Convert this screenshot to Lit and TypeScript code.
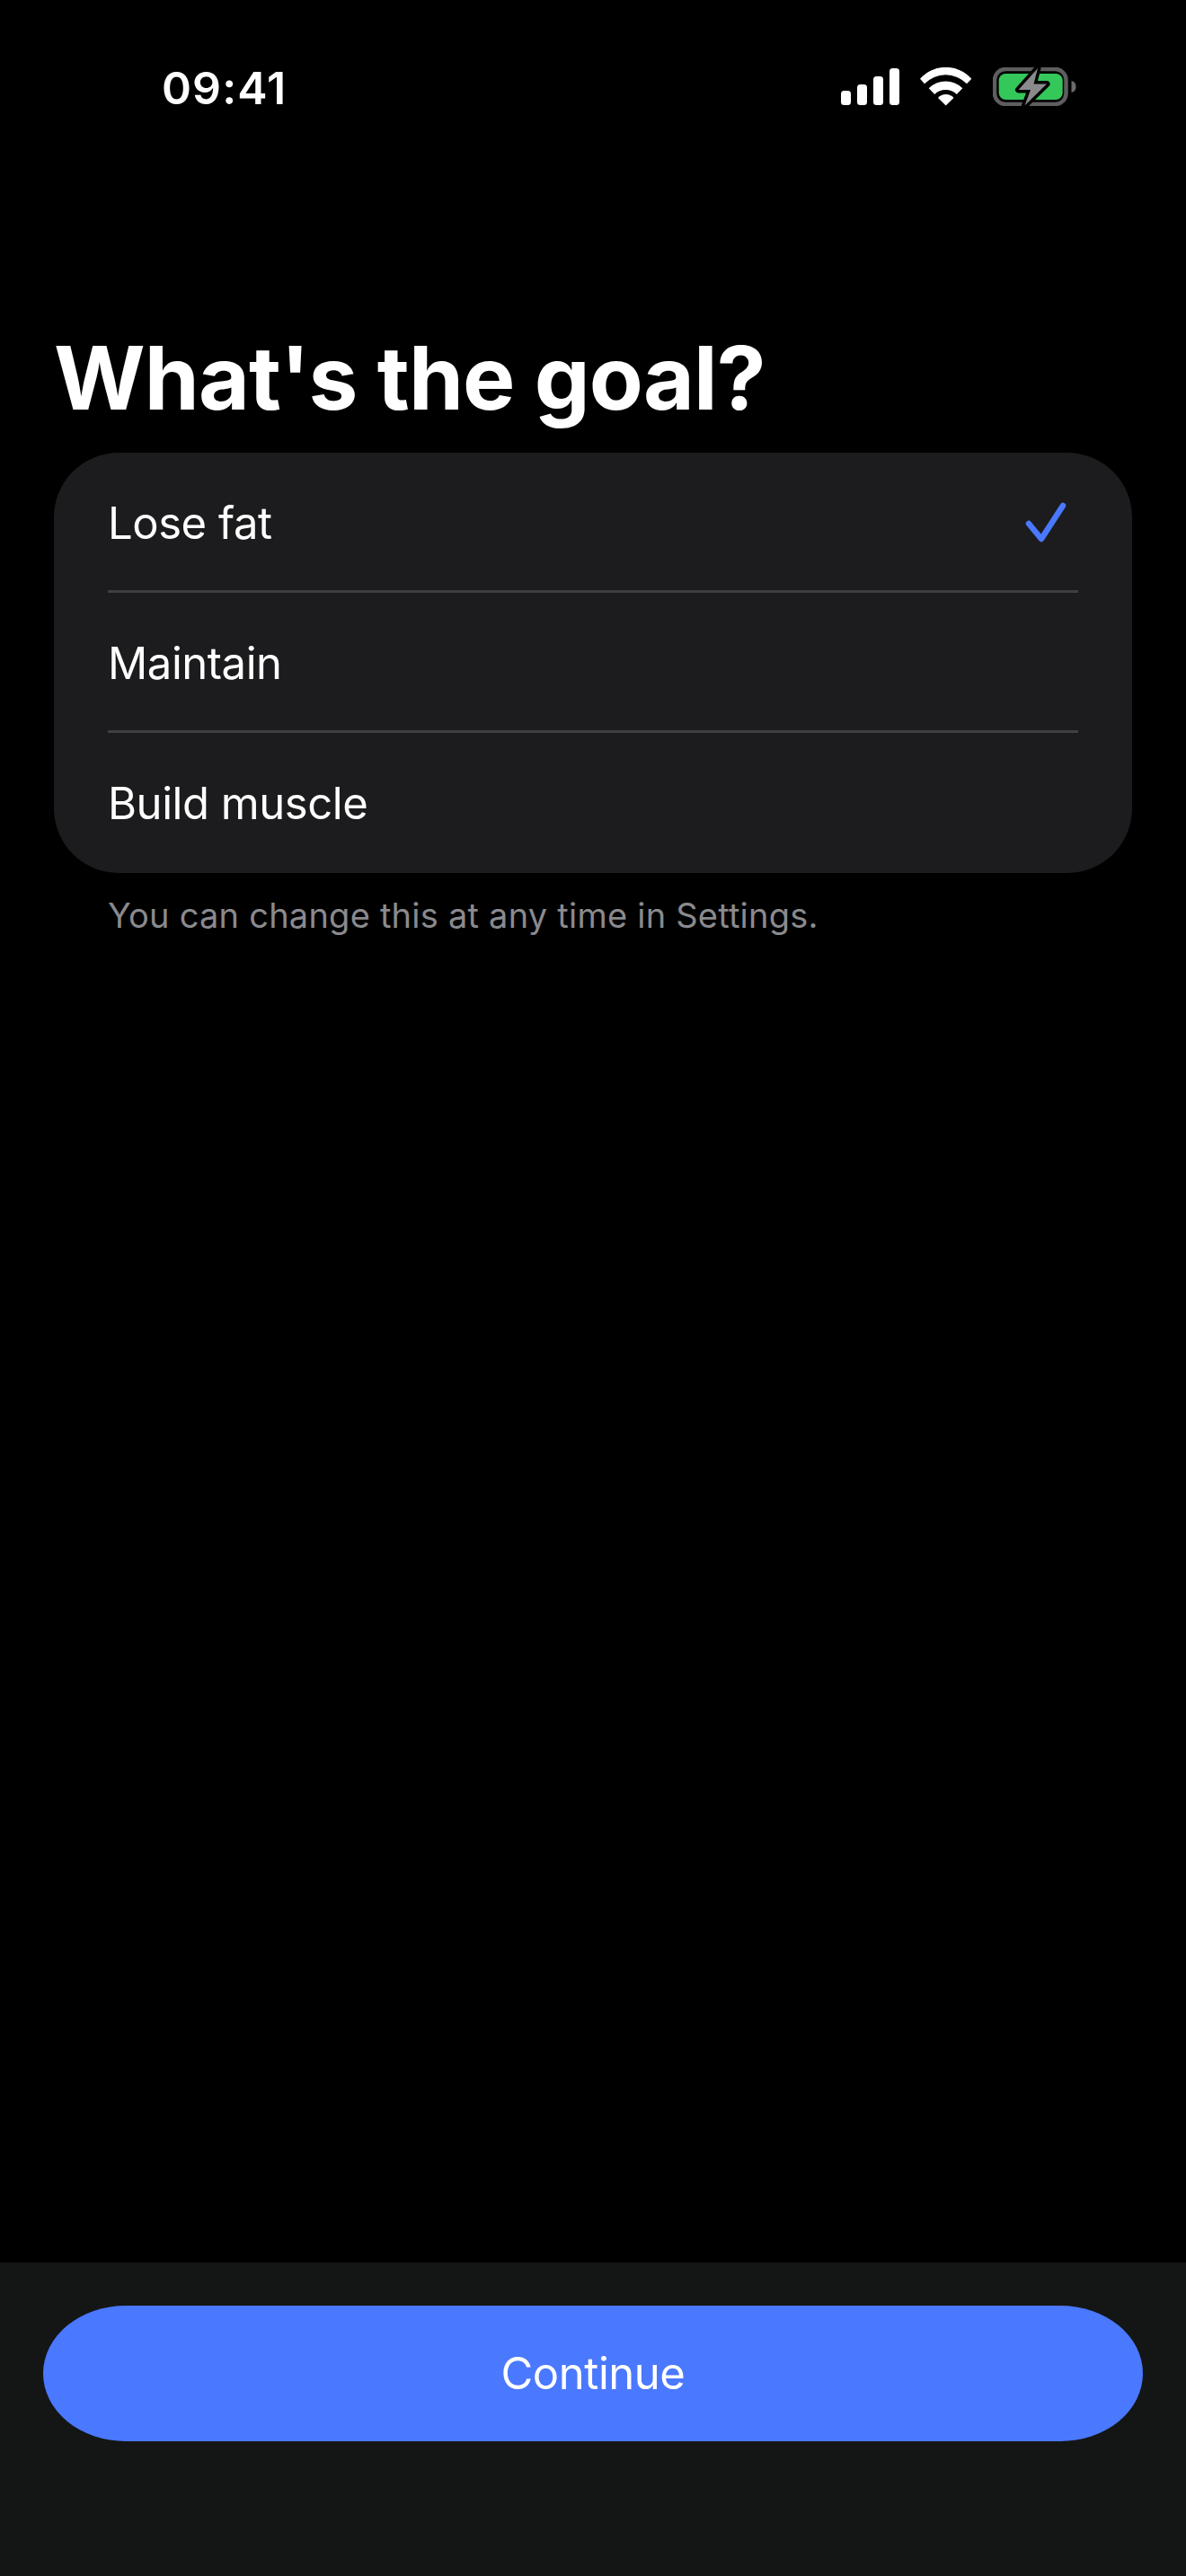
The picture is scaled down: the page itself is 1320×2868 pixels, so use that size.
import { LitElement, html, css } from "lit";
import { customElement, state } from "lit/decorators.js";

const OPTIONS = ["Lose fat", "Maintain", "Build muscle"];

@customElement("app-root")
export class AppRoot extends LitElement {
  @state() selected = 0;

  static styles = css`
    :host {
      display: flex;
      flex-direction: column;
      width: 1320px;
      height: 2868px;
      background: #000;
      color: #fff;
      font-family: Inter, "Liberation Sans", sans-serif;
      overflow: hidden;
    }
    .status {
      height: 196px;
      flex: none;
      display: flex;
      justify-content: space-between;
      align-items: flex-start;
      padding: 75px 122px 0 180px;
      box-sizing: border-box;
    }
    .time {
      font-size: 50px;
      font-weight: 600;
      line-height: 46px;
      letter-spacing: 1.1px;
    }
    .icons {
      display: flex;
      align-items: flex-start;
      gap: 23px;
    }
    .icons svg {
      display: block;
    }
    .signal { margin-top: 1px; }
    .main {
      flex: 1;
      padding: 0 60px;
    }
    h1 {
      margin: 0;
      padding: 166px 0 24px;
      font-size: 98px;
      line-height: 118px;
      font-weight: 700;
      letter-spacing: -0.9px;
    }
    .card {
      background: #1c1c1e;
      border-radius: 72px;
    }
    .row {
      height: 156px;
      padding: 0 60px;
      display: flex;
      align-items: center;
      justify-content: space-between;
      position: relative;
      font-size: 49px;
      letter-spacing: -0.45px;
    }
    .row + .row::before {
      content: "";
      position: absolute;
      left: 60px;
      right: 60px;
      top: -3px;
      height: 3px;
      background: #3f3f41;
    }
    .check { display: block; margin-right: 10px; }
    .note {
      margin: 0;
      padding: 0 60px;
      margin-top: 24px;
      font-size: 38px;
      line-height: 46px;
      letter-spacing: 0.23px;
      color: #8a8a8e;
    }
    .footer {
      flex: none;
      height: 349px;
      box-sizing: border-box;
      background: #141615;
      padding: 48px 48px 0;
    }
    .cta {
      display: flex;
      align-items: center;
      justify-content: center;
      width: 100%;
      height: 151px;
      border: 0;
      border-radius: 92px / 75.5px;
      background: #4a78ff;
      color: #fff;
      font: 400 49px Inter, "Liberation Sans", sans-serif;
      letter-spacing: -0.45px;
    }
  `;

  private signal() {
    return html`<svg class="signal" width="65" height="41" viewBox="0 0 65 41" fill="#fff">
      <rect x="0" y="25" width="11" height="16" rx="3.5" />
      <rect x="18" y="18" width="11" height="23" rx="3.5" />
      <rect x="36" y="9" width="11" height="32" rx="3.5" />
      <rect x="54" y="0" width="11" height="41" rx="3.5" />
    </svg>`;
  }

  private wifi() {
    return html`<svg width="58" height="43" viewBox="0 0 58 43" fill="#fff">
      <path d="M0 12.7 A38.3 38.3 0 0 1 57.3 12.7 L52 18.3 A32.6 32.6 0 0 0 5 18.3 Z" />
      <path d="M9.7 23.3 A26.7 26.7 0 0 1 47.3 23.3 L40.8 30 A17.5 17.5 0 0 0 16.2 30 Z" />
      <path d="M20 34 A11.5 11.5 0 0 1 37.5 34 L28.7 42.5 Z" />
    </svg>`;
  }

  private battery() {
    return html`<svg width="93" height="43" viewBox="0 0 93 43">
      <rect x="2" y="2" width="79.5" height="39" rx="12" fill="none" stroke="#5e5e60" stroke-width="4.5" />
      <rect x="6.7" y="7" width="71" height="29" rx="7.5" fill="#34c759" />
      <path d="M87.5 15 Q92.5 16 92.5 21.5 Q92.5 27 87.5 28 Z" fill="#6a6a6c" />
      <path
        d="M50 1 L28.5 25 L42 25 L35.5 42.5 L60 18.5 L45.5 18.5 Z"
        fill="#8a8a8c"
        stroke="#000"
        stroke-width="7"
        stroke-linejoin="round"
        paint-order="stroke"
      />
    </svg>`;
  }

  render() {
    return html`
      <div class="status">
        <span class="time">09:41</span>
        <div class="icons">${this.signal()}${this.wifi()}${this.battery()}</div>
      </div>
      <div class="main">
        <h1>What's the goal?</h1>
        <div class="card">
          ${OPTIONS.map(
            (o, i) => html`<div class="row">
              <span>${o}</span>
              ${i === this.selected
                ? html`<svg class="check" width="50" height="50" viewBox="0 0 50 50" fill="none">
                    <path d="M5 26 L19 43 L43 6" stroke="#4a78ff" stroke-width="6.5" stroke-linecap="round" stroke-linejoin="round" />
                  </svg>`
                : ""}
            </div>`
          )}
        </div>
        <p class="note">You can change this at any time in Settings.</p>
      </div>
      <div class="footer">
        <button class="cta">Continue</button>
      </div>
    `;
  }
}
